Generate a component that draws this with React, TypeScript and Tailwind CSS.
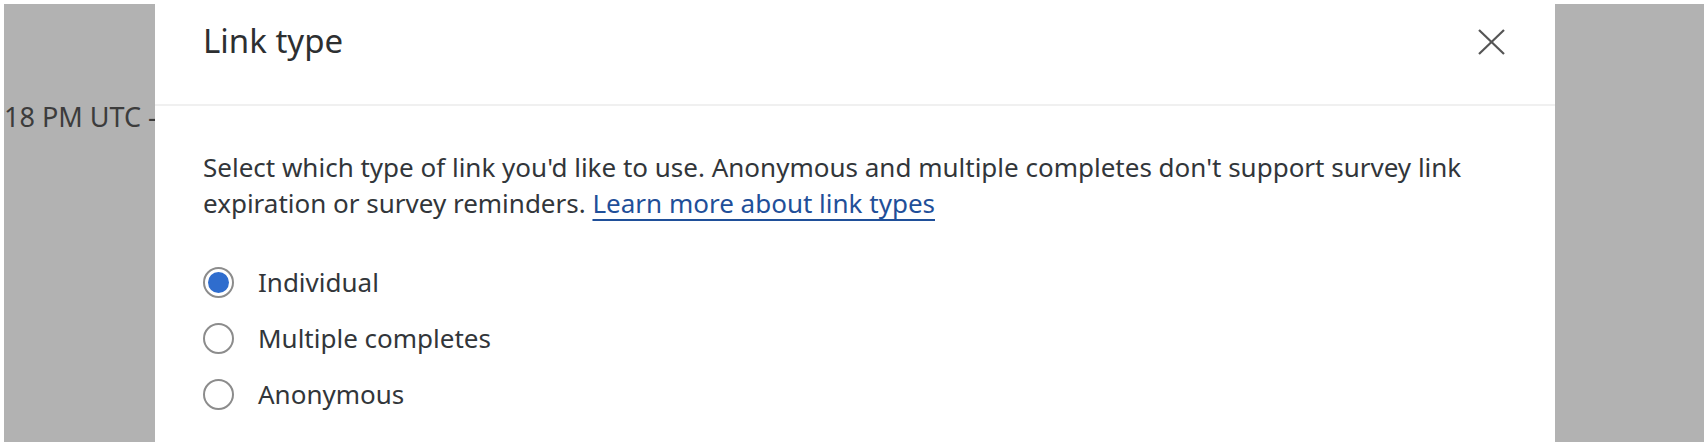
const options = [
  { id: "individual", label: "Individual", checked: true },
  { id: "multiple", label: "Multiple completes", checked: false },
  { id: "anonymous", label: "Anonymous", checked: false },
]

function Radio({ checked }: { checked: boolean }) {
  return (
    <span className="w-[31px] h-[31px] shrink-0 rounded-full border-2 border-[#8c8c8c] bg-white flex items-center justify-center">
      {checked && <span className="w-[21px] h-[21px] rounded-full bg-[#2f6dce]" />}
    </span>
  )
}

export default function App() {
  return (
    <div
      className="w-[1708px] h-[444px] bg-white pt-[4px] pl-[4px] pr-[4px] pb-[2px]"
      style={{ fontFamily: '"Noto Sans", "Open Sans", sans-serif' }}
    >
      <div className="flex h-full bg-[#b2b2b2]">
        {/* page behind the overlay */}
        <div className="w-[151px] shrink-0 overflow-hidden whitespace-nowrap pt-[95px] text-[27px] leading-[36px] text-[#3c3c3c]">
          18 PM UTC - 11:30 PM UTC
        </div>

        {/* dialog */}
        <div className="w-[1400px] shrink-0 bg-white flex flex-col">
          <div className="h-[102px] border-b-2 border-[#f0f0f0] flex justify-between pl-[48px] pr-[50px]">
            <h2 className="pt-[17px] text-[33px] leading-[40px] text-[#2d2f31]">Link type</h2>
            <button className="mt-[25px] w-[27px] h-[26px] text-[#555]" title="Close">
              <svg viewBox="0 0 27 26" width="27" height="26" fill="none" stroke="currentColor" strokeWidth="2.2">
                <line x1="1" y1="1" x2="26" y2="25" />
                <line x1="26" y1="1" x2="1" y2="25" />
              </svg>
            </button>
          </div>

          <div className="pt-[43px] pl-[48px] pr-[40px]">
            <p className="text-[26px] leading-[36px] text-[#32363a]">
              Select which type of link you'd like to use. Anonymous and multiple completes don't support survey link
              expiration or survey reminders.{" "}
              <a href="#" className="text-[#1f4f99] underline decoration-2 underline-offset-[6px]">
                Learn more about link types
              </a>
            </p>

            <div className="mt-[33px] flex flex-col">
              {options.map((opt) => (
                <label key={opt.id} className="h-[56px] flex items-center gap-[24px] cursor-pointer">
                  <Radio checked={opt.checked} />
                  <span className="text-[26px] text-[#32363a]">{opt.label}</span>
                </label>
              ))}
            </div>
          </div>
        </div>

        <div className="flex-1" />
      </div>
    </div>
  )
}
